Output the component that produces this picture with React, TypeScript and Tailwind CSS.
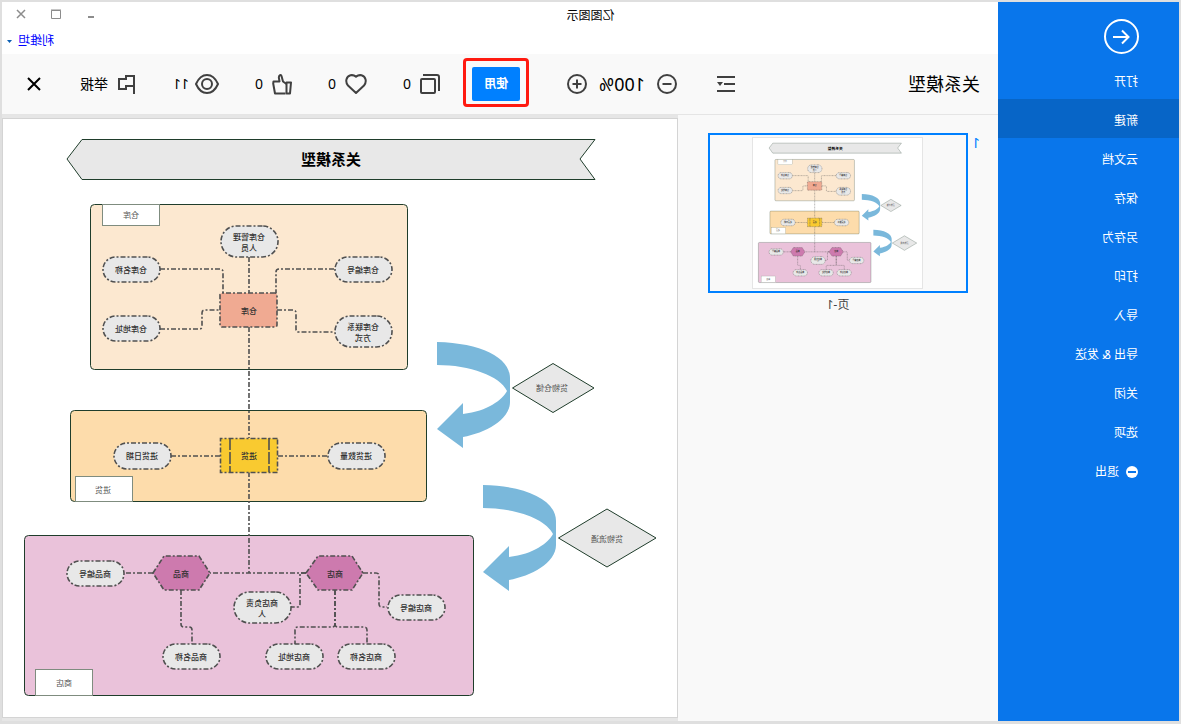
import React from 'react';

interface StatProps {
  label: string;
  value: string;
  className: string;
  children: React.ReactNode;
}

interface NodeData {
  x: number;
  y: number;
  h: number;
  lines: string[];
}

const menuItems = [
  '打开',
  '新建',
  '云文档',
  '保存',
  '另存为',
  '打印',
  '导入',
  '导出 & 发送',
  '关闭',
  '选项',
];

// rounded attribute nodes of the diagram
const pills: NodeData[] = [
  { x: 400, y: 108, h: 31, lines: ['仓库管理', '人员'] },
  { x: 518, y: 139, h: 25, lines: ['仓库名称'] },
  { x: 286, y: 139, h: 25, lines: ['仓库编号'] },
  { x: 518, y: 198, h: 25, lines: ['仓库地址'] },
  { x: 286, y: 198, h: 31, lines: ['仓库联系', '方式'] },
  { x: 507, y: 325, h: 26, lines: ['进货日期'] },
  { x: 293, y: 325, h: 26, lines: ['进货数量'] },
  { x: 554, y: 443, h: 25, lines: ['商品编号'] },
  { x: 458, y: 526, h: 25, lines: ['商品名称'] },
  { x: 355, y: 526, h: 25, lines: ['商店地址'] },
  { x: 283, y: 526, h: 25, lines: ['商店名称'] },
  { x: 387, y: 474, h: 31, lines: ['商店负责', '人'] },
  { x: 233, y: 477, h: 25, lines: ['商店编号'] },
];

const connectors = [
  'M429 139V175',
  'M518 151H458q-3 0 -3 3V175',
  'M344 151H399q3 0 3 3V175',
  'M518 211H479q-3 0 -3 -3V195q0 -3 -3 -3H457',
  'M401 192H385q-3 0 -3 3V211q0 3 -3 3H344',
  'M429 209V320',
  'M458 338H507',
  'M351 338H400',
  'M429 354V455',
  'M525 455H554',
  'M372 455H468',
  'M497 472V506q0 3 -3 3h-5q-3 0 -3 3V526',
  'M343 472V506q0 3 3 3H380q3 0 3 3V526',
  'M343 472V506q0 3 -3 3H314q-3 0 -3 3V526',
  'M372 455H378V486q0 3 3 3H387',
  'M315 455H302q-3 0 -3 3V486q0 3 -3 3H291',
];

const ARROW =
  'M241 224C198 225 168 239 168 260V284C168 302 193 315 215 319V330L241 311L215 285V296C190 293 176 282 171 273C178 258 208 247 241 247Z';

const Diagram: React.FC = () => (
  <svg
    viewBox="1 1 674 598"
    preserveAspectRatio="xMidYMin meet"
    className="block h-full w-full"
    textAnchor="middle"
    dominantBaseline="central"
    fontSize="8"
  >
    <g fill="#e8e8e8" stroke="#1f3d2b">
      <path d="M83 21.5H596L611 41L596 61.5H83L98 41Z" />
      <path d="M125 245.5L165.5 270L125 294.5L84 270Z" />
      <path d="M71 391L119.5 420L71 449L22 420Z" />
      <rect x="270.5" y="86.5" width="317" height="165" rx="4" fill="#fce8d0" />
      <rect x="251.5" y="292.5" width="356" height="91" rx="4" fill="#fddcab" />
      <rect x="204.5" y="417.5" width="449" height="160" rx="4" fill="#eac2da" />
    </g>
    <text x="347" y="41" fontSize="15" fontWeight="700" fill="#000">
      关系模型
    </text>
    <g fill="#fff" stroke="#7f8c7f">
      <rect x="518.5" y="86.5" width="57" height="21" />
      <rect x="545.5" y="358.5" width="57" height="25" />
      <rect x="585.5" y="551.5" width="57" height="26" />
    </g>
    <g fill="#555">
      <text x="547" y="96">仓库</text>
      <text x="575" y="371">进货</text>
      <text x="614" y="564">商店</text>
      <text x="126" y="269">货物仓储</text>
      <text x="71" y="420">货物流通</text>
    </g>
    <g fill="#7ab8db">
      <path d={ARROW} />
      <path d={ARROW} transform="translate(-46 143)" />
    </g>
    <g fill="none" stroke="#505050" strokeWidth="1.6" strokeDasharray="5 2 2 2">
      {connectors.map((d) => (
        <path d={d} key={d} />
      ))}
      <rect x="401" y="175" width="57" height="34" rx="2" fill="#f0aa92" />
      <rect x="400.5" y="320.5" width="57" height="34" fill="#f9ca30" />
      <path d="M409 320V354M448 320V354" strokeDasharray="12 2" />
      <path d="M525 455L514 438H479L468 455L479 472H514Z" fill="#cd7aae" />
      <path d="M372 455L360 438H326L315 455L326 472H360Z" fill="#cd7aae" />
      {pills.map((pill) => (
        <rect
          key={pill.lines[0]}
          x={pill.x}
          y={pill.y}
          width="57"
          height={pill.h}
          rx={pill.h / 2}
          fill="#e8e8e8"
        />
      ))}
    </g>
    <g fill="#303030" fontWeight="500">
      <text x="429" y="192">仓库</text>
      <text x="429" y="337">进货</text>
      <text x="497" y="455">商品</text>
      <text x="343" y="455">商店</text>
      {pills.map((pill) =>
        pill.lines.map((line, index) => (
          <text
            key={line}
            x={pill.x + 29}
            y={pill.y + (pill.lines.length === 1 ? 12 : 10 + index * 11)}
          >
            {line}
          </text>
        ))
      )}
    </g>
  </svg>
);

const Stat: React.FC<StatProps> = ({ label, value, className, children }) => (
  <button aria-label={label} className={`flex items-center ${className}`}>
    {children}
    <span>{value}</span>
  </button>
);

const Sidebar: React.FC = () => (
  <aside className="w-[181px] shrink-0 bg-[#0976eb] text-xs text-white">
    <button aria-label="返回" className="mt-[17px] ml-10 block">
      <svg width="35" height="35" fill="none" stroke="currentColor" strokeWidth="2">
        <circle cx="17.5" cy="17.5" r="16.5" />
        <path d="M26 18H11M17 11.5L10.5 18L17 24.5" />
      </svg>
    </button>
    <nav className="mt-[6px]">
      {menuItems.map((item) => (
        <a
          href="#"
          key={item}
          className={`flex h-[39px] items-center pt-1 pl-[41px] ${
            item === '新建' ? 'bg-[#0765c7]' : ''
          }`}
        >
          {item}
        </a>
      ))}
      <a href="#" className="flex h-[39px] items-center gap-[7px] pt-1 pl-[41px]">
        <svg width="12" height="12">
          <circle cx="6" cy="6" r="6" fill="#fff" />
          <path d="M2 6H10" stroke="#0976eb" strokeWidth="2" />
        </svg>
        退出
      </a>
    </nav>
  </aside>
);

const TitleBar: React.FC = () => (
  <header className="flex h-[52px] text-xs">
    <h1 className="flex-1 pt-[6px] text-center text-black">亿图图示</h1>
    {/* as wide as the sidebar, so the title stays in the middle of the window */}
    <div className="flex w-[181px] flex-col items-end justify-between pt-[7px] pb-[5px]">
      <div className="flex gap-[25px] pr-[14px] text-[#8c8c8c]">
        <button aria-label="最小化">
          <svg width="10" height="10" stroke="currentColor" strokeWidth="2">
            <path d="M2 8H8" />
          </svg>
        </button>
        <button aria-label="最大化">
          <svg width="10" height="10" fill="none" stroke="currentColor">
            <path d="M0.5 1.5H9.5V9.5H0.5ZM0 1H10" />
          </svg>
        </button>
        <button aria-label="关闭窗口">
          <svg width="10" height="10" stroke="currentColor" strokeWidth="1.5">
            <path d="M1 1L9 9M9 1L1 9" />
          </svg>
        </button>
      </div>
      <button className="flex items-center gap-[6px] pr-[5px] text-[#0000ff]">
        利维坦
        <svg width="5" height="3" fill="#0a5fb4">
          <path d="M0 0H5L2.500 3Z" />
        </svg>
      </button>
    </div>
  </header>
);

const Toolbar: React.FC = () => (
  <div className="flex h-[61px] items-center border-b border-[#e5e5e5] bg-[#f9f9f9] text-sm text-black">
    <div className="flex w-[321px] items-center justify-between pr-10 pl-[18px]">
      <h2 className="text-lg">关系模型</h2>
      <button aria-label="页面列表">
        <svg width="18" height="16" fill="none" stroke="#404040" strokeWidth="2">
          <path d="M0 1H18M0 8H11M0 15H18" />
          <path d="M12 6H18L15 10Z" fill="#404040" stroke="none" />
        </svg>
      </button>
    </div>
    <div className="flex items-center gap-3">
      <button aria-label="缩小">
        <svg width="20" height="20" fill="none" stroke="#404040" strokeWidth="2">
          <circle cx="10" cy="10" r="9" />
          <path d="M5.500 10H14.500" />
        </svg>
      </button>
      <span className="text-lg">100%</span>
      <button aria-label="放大">
        <svg width="20" height="20" fill="none" stroke="#404040" strokeWidth="2">
          <circle cx="10" cy="10" r="9" />
          <path d="M5.500 10H14.500M10 5.500V14.500" />
        </svg>
      </button>
    </div>
    <div className="mb-[3px] ml-[38px] flex rounded border-3 border-[#ff1a10] px-[6px] pt-[6px] pb-[3px]">
      <button className="h-[34px] w-12 rounded-xs bg-[#0080ff] text-xs font-bold text-white">
        使用
      </button>
    </div>
    <div className="ml-auto flex items-center gap-9 pr-[25px]">
      <Stat label="复制" value="0" className="min-w-9 gap-[9px]">
        <svg width="20" height="20" fill="none" stroke="#404040" strokeWidth="2">
          <rect x="1" y="5" width="14" height="14" rx="1" transform="translate(4 0)" />
          <path d="M1 17V3Q1 1 3 1H17" />
        </svg>
      </Stat>
      <Stat label="收藏" value="0" className="min-w-9 gap-[9px]">
        <svg width="22" height="20" fill="none" stroke="#404040" strokeWidth="2" strokeLinejoin="round">
          <path d="M11 19L3 11.500C0 8 1 2.500 5.500 1.300C8 0.700 9.500 1.500 11 2.800C12.500 1.500 14 0.700 16.500 1.300C21 2.500 22 8 19 11.500Z" />
        </svg>
      </Stat>
      <Stat label="点赞" value="0" className="min-w-9 gap-[9px]">
        <svg width="20" height="21" fill="none" stroke="#404040" strokeWidth="2" strokeLinejoin="round">
          <path d="M5.500 10L9 7.500L10.500 2Q11 0.700 12 1.200Q13.500 2 13 4.500L12.500 7.500H18.500L18.800 9.500L17 19.500H6.500" />
          <path d="M1 8.500H5.500V19.500H2Z" />
        </svg>
      </Stat>
      <Stat label="浏览" value="11" className="min-w-12 gap-[6px]">
        <svg width="24" height="20" fill="none" stroke="#404040" strokeWidth="2">
          <path d="M1 10Q5 1 12 1T23 10Q19 19 12 19T1 10Z" />
          <circle cx="12" cy="10" r="5" />
        </svg>
      </Stat>
      <Stat label="举报" value="举报" className="min-w-[58px] gap-[10px]">
        <svg width="17" height="19" fill="none" stroke="#404040" strokeWidth="2">
          <path d="M1 19V1H9V4H16V14H9V11H1" />
        </svg>
      </Stat>
      <button aria-label="关闭">
        <svg width="14" height="14" stroke="#000" strokeWidth="2">
          <path d="M1 1L13 13M13 1L1 13" />
        </svg>
      </button>
    </div>
  </div>
);

const App: React.FC = () => {
  return (
    // the entire window is shown as a mirror image
    <div className="flex h-screen w-full -scale-x-100 border-2 border-b-3 border-[#dfdfdf] bg-white font-['Noto_Sans','Noto_Sans_CJK_SC',sans-serif]">
      <Sidebar />
      <div className="flex min-w-0 flex-1 flex-col">
        <TitleBar />
        <Toolbar />
        <div className="flex min-h-0 flex-1">
          <section className="flex w-[320px] shrink-0 items-start bg-[#f9f9f9] pt-[18px] pl-[18px]">
            <span className="w-3 text-sm text-[#0080ff]">1</span>
            <figure className="w-[260px]">
              <div className="flex h-[160px] items-center justify-center border-2 border-[#0080ff]">
                <div className="h-[152px] w-[171px] border border-[#e5e5e5] bg-white">
                  <Diagram />
                </div>
              </div>
              <figcaption className="pt-1 text-center text-xs text-[#444]">
                页-1
              </figcaption>
            </figure>
          </section>
          <main className="min-w-0 flex-1 bg-[#e6e6e6] py-[3px]">
            <div className="h-full border border-[#d4d4d4] bg-white">
              <Diagram />
            </div>
          </main>
        </div>
      </div>
    </div>
  );
};

export default App;
